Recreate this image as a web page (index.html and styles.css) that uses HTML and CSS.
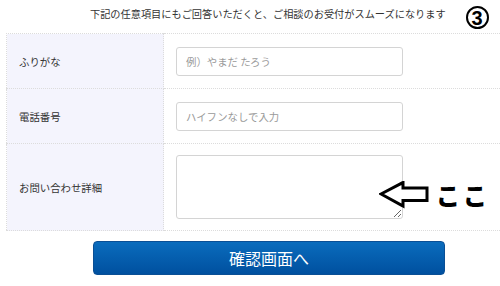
FILE: index.html
```html
<!DOCTYPE html>
<html lang="ja">
<head>
	<meta charset="UTF-8">
	<title>お問い合わせフォーム</title>
	<link rel="stylesheet" href="styles.css">
</head>
<body>
	<div class="form-wrap">
		<div class="notice">
			<p>下記の任意項目にもご回答いただくと、ご相談のお受付がスムーズになります</p>
			<span class="step">3</span>
		</div>

		<table class="form-table">
			<tr class="row-short">
				<th>ふりがな</th>
				<td><input type="text" placeholder="例）やまだ たろう"></td>
			</tr>
			<tr class="row-short">
				<th>電話番号</th>
				<td><input type="text" placeholder="ハイフンなしで入力"></td>
			</tr>
			<tr class="row-tall">
				<th>お問い合わせ詳細</th>
				<td><textarea></textarea></td>
			</tr>
		</table>

		<!-- 注釈：矢印と「ここ」 -->
		<div class="pointer">
			<svg width="50" height="28" viewBox="0 0 50 28">
				<polygon points="2,13 24,1.5 24,7 48,7 48,19.5 24,19.5 24,25" fill="#fff" stroke="#000" stroke-width="3" stroke-linejoin="miter"/>
			</svg>
			<span>ここ</span>
		</div>

		<button class="btn-confirm">確認画面へ</button>
	</div>
</body>
</html>
```

FILE: styles.css
```css
*{box-sizing:border-box;}
html,body{margin:0;padding:0;}
body{width:500px;height:286px;overflow:hidden;background:#fff;font-family:"Noto Sans CJK JP","Noto Sans",sans-serif;color:#333;}

.form-wrap{position:relative;width:500px;}

.notice{display:flex;align-items:center;height:33px;padding-left:90px;}
.notice p{margin:0;font-size:10.2px;color:#333;line-height:1;padding-bottom:5px;letter-spacing:0;}
.notice .step{display:flex;align-items:center;justify-content:center;width:23px;height:23px;margin:2px 0 0 20px;border:2.5px solid #000;border-radius:50%;font-family:"Liberation Sans",Arial,sans-serif;font-size:20px;font-weight:bold;color:#000;line-height:1;}

.form-table{margin-left:6px;width:494px;border-collapse:collapse;border-top:1px dotted #dcdcdc;border-left:1px dotted #dcdcdc;}
.form-table th,.form-table td{border-bottom:1px dotted #dcdcdc;font-weight:normal;text-align:left;vertical-align:middle;}
.form-table th{width:157px;background:#f4f4fd;border-right:1px dotted #dcdcdc;padding:0 0 0 12px;font-size:10.4px;color:#333;}
.form-table td{padding:0 0 0 12px;}
.row-short th,.row-short td{height:55px;}
.row-tall th,.row-tall td{height:87px;}

.form-table input,.form-table textarea{display:block;width:227px;border:1px solid #d4d4d4;border-radius:3px;font-family:inherit;font-size:10.4px;color:#333;padding:0 9px;background:#fff;}
.form-table input{height:29px;}
.form-table textarea{height:64px;resize:vertical;margin-top:-1px;}
.form-table input::placeholder{color:#9a9a9a;}

.pointer{position:absolute;left:379px;top:181px;display:flex;align-items:center;gap:7px;}
.pointer svg{display:block;}
.pointer span{font-size:24px;font-weight:900;color:#000;line-height:1;letter-spacing:3px;}

.btn-confirm{display:block;width:352px;height:34px;margin:10px 0 0 93px;border:1px solid #0a4f95;border-radius:4px;background:linear-gradient(#0a6cbd,#00509f);color:#fff;font-family:inherit;font-size:16px;letter-spacing:0;cursor:pointer;}
```
